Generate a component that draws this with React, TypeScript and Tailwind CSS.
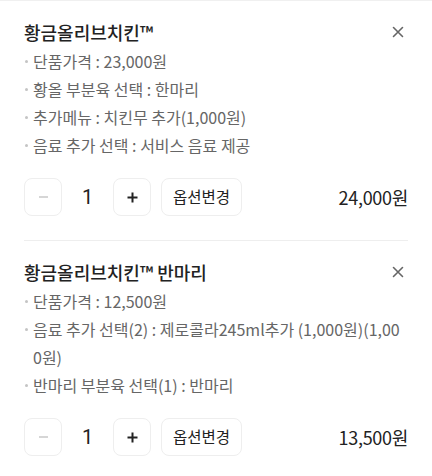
import React from "react";

const font = { fontFamily: '"Noto Sans CJK KR", "Noto Sans", sans-serif' };

type Item = { title: string; lines: [string, string][]; price: string };

const items: Item[] = [
  {
    title: "황금올리브치킨™",
    lines: [
      ["단품가격", "23,000원"],
      ["황올 부분육 선택", "한마리"],
      ["추가메뉴", "치킨무 추가(1,000원)"],
      ["음료 추가 선택", "서비스 음료 제공"],
    ],
    price: "24,000원",
  },
  {
    title: "황금올리브치킨™ 반마리",
    lines: [
      ["단품가격", "12,500원"],
      ["음료 추가 선택(2)", "제로콜라245ml추가 (1,000원)(1,000원)"],
      ["반마리 부분육 선택(1)", "반마리"],
    ],
    price: "13,500원",
  },
];

function CloseIcon() {
  return (
    <svg width="12" height="12" viewBox="0 0 12 12" fill="none">
      <path d="M1.5 1.5L10.5 10.5M10.5 1.5L1.5 10.5" stroke="#666" strokeWidth="1.6" strokeLinecap="round" />
    </svg>
  );
}

function CartItem({ item, first }: { item: Item; first: boolean }) {
  return (
    <div className={first ? "pt-[18px] pb-[24px]" : "pt-[18px] pb-[20px] border-t border-[#eeeeee]"}>
      <div className="flex items-start justify-between">
        <div className="text-[18px] leading-[26px] font-medium text-[#222]">{item.title}</div>
        <button className="w-[18px] h-[26px] flex items-center justify-center mr-[1px]">
          <CloseIcon />
        </button>
      </div>
      <ul className="mt-[2px] pr-[2px]">
        {item.lines.map(([k, v], i) => (
          <li key={i} className="relative pl-[9px] text-[16px] leading-[28px] text-[#666] break-all">
            <span className="absolute left-[1px] top-[13px] w-[3px] h-[3px] rounded-full bg-[#c4c4c4]" />
            {k} : {v}
          </li>
        ))}
      </ul>
      <div className="mt-[19px] flex items-center">
        <button className="w-[38px] h-[38px] rounded-[8px] border border-[#eeeeee] flex items-center justify-center">
          <span className="block w-[9px] h-[2px] bg-[#d6d6d6]" />
        </button>
        <div className="w-[51px] text-center text-[20px] text-[#222]" style={{ fontFamily: "Roboto, sans-serif" }}>1</div>
        <button className="w-[38px] h-[38px] rounded-[8px] border border-[#eeeeee] flex items-center justify-center">
          <svg width="11" height="11" viewBox="0 0 11 11">
            <path d="M5.5 0.5V10.5M0.5 5.5H10.5" stroke="#222" strokeWidth="2" />
          </svg>
        </button>
        <button className="ml-[10px] h-[38px] px-[11px] rounded-[8px] border border-[#eeeeee] text-[15.5px] text-[#222]">
          옵션변경
        </button>
        <div className="ml-auto text-[18px] text-[#222] tracking-[-0.3px]">{item.price}</div>
      </div>
    </div>
  );
}

export default function App() {
  return (
    <div className="w-[432px] h-[476px] bg-white border-t border-[#f0f0f0] overflow-hidden" style={font}>
      <div className="px-6">
        {items.map((it, i) => (
          <CartItem key={i} item={it} first={i === 0} />
        ))}
      </div>
    </div>
  );
}
